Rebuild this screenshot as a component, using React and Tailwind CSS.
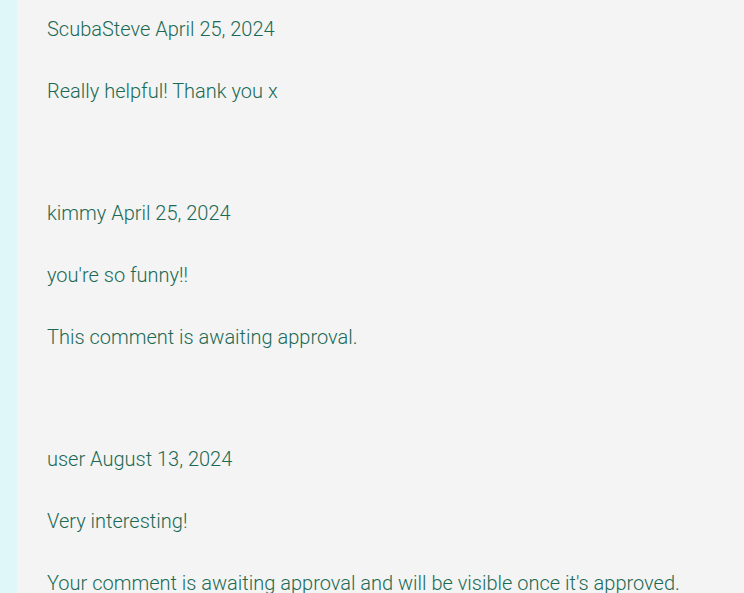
const comments = [
  { author: 'ScubaSteve', date: 'April 25, 2024', body: 'Really helpful! Thank you x' },
  { author: 'kimmy', date: 'April 25, 2024', body: "you're so funny!!", note: 'This comment is awaiting approval.' },
  { author: 'user', date: 'August 13, 2024', body: 'Very interesting!', note: "Your comment is awaiting approval and will be visible once it's approved." },
];

export default function App() {
  return (
    <div className="flex h-[593px] w-[744px] overflow-hidden bg-[#f4f4f4]" style={{ fontFamily: 'Roboto, "Liberation Sans", sans-serif' }}>
      <div className="w-[17px] shrink-0 bg-[#dff7f9]" />
      <div className="flex flex-col gap-[92px] pl-[30px] pt-[14px] text-[20px] font-light leading-[30px] text-[#1b6a55]">
        {comments.map(c => (
          <div key={c.author} className="flex flex-col gap-[32px]">
            <p>{c.author} {c.date}</p>
            <p>{c.body}</p>
            {c.note && <p>{c.note}</p>}
          </div>
        ))}
      </div>
    </div>
  );
}
